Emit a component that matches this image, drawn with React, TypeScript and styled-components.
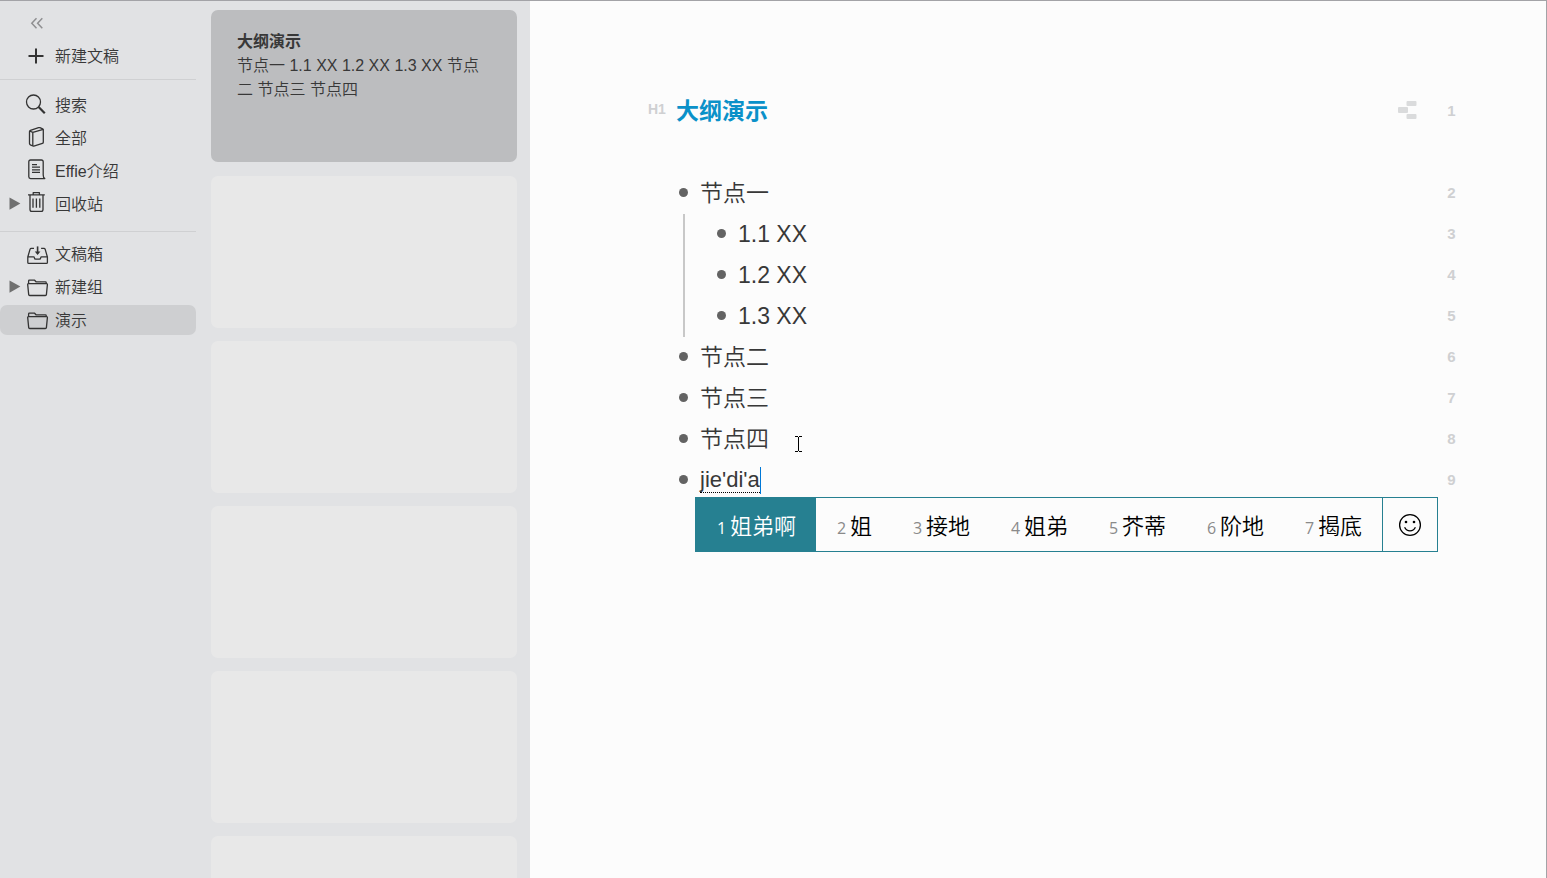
import React from "react";
import styled, { createGlobalStyle } from "styled-components";

const GlobalStyle = createGlobalStyle`
  * { box-sizing: border-box; }
  body { margin: 0; overflow: hidden; }
  body, button {
    font-family: "Liberation Sans", "Noto Sans CJK SC", sans-serif;
    font-weight: 350;
    color: #383838;
  }
  button {
    border: 0;
    padding: 0;
    background: none;
    text-align: left;
    cursor: pointer;
  }
  h1, h2, p, ul, ol { margin: 0; padding: 0; }
  ul, ol { list-style: none; }
  svg { display: block; }
`;

const Shell = styled.div`
  display: flex;
  height: 100vh;
  overflow: hidden;
  background: #e1e2e4;
  border-top: 1px solid #a3a3a7;
  border-right: 1px solid #a3a3a7;
`;

const Nav = styled.nav`
  flex: 0 0 196px;
  padding-top: 11px;
`;

const CollapseButton = styled.button`
  display: block;
  margin: 0 0 7px 30px;
  height: 22px;
`;

const NavList = styled.ul`
  display: flex;
  flex-direction: column;
  gap: 3px;
`;

const NavItem = styled.button<{ $selected?: boolean }>`
  display: grid;
  grid-template-columns: 12px 24px 1fr;
  column-gap: 4px;
  align-items: center;
  width: 100%;
  height: 30px;
  padding-left: 9px;
  border-radius: 7px;
  font-size: 16px;
  line-height: 28px;
  background: ${(p) => (p.$selected ? "#cecfd1" : "transparent")};
`;

const NavLabel = styled.span`
  padding: 2px 0 0 2px;
`;

const Divider = styled.hr<{ $above: number; $below: number }>`
  height: 1px;
  border: 0;
  margin: ${(p) => p.$above}px 0 ${(p) => p.$below}px;
  background: #cfd0d2;
`;

const Sheets = styled.section`
  flex: 0 0 334px;
  padding: 9px 13px 0 15px;
`;

const SheetCard = styled.article`
  height: 152px;
  padding: 20px 26px;
  border-radius: 7px;
  background: #bcbdbf;
  font-size: 16px;
  line-height: 24px;
`;

const SheetTitle = styled.h2`
  font-size: 16px;
  line-height: 24px;
  font-weight: 700;
`;

const EmptySheets = styled.ul`
  display: flex;
  flex-direction: column;
  gap: 13px;
  margin-top: 14px;
`;

const EmptySheet = styled.li`
  height: 152px;
  border-radius: 7px;
  background: #e8e8e8;
`;

const Editor = styled.main`
  position: relative;
  flex: 1;
  min-width: 0;
  padding: 90px 90px 0 118px;
  background: #fcfcfc;
`;

const HeadingRow = styled.header`
  display: flex;
  align-items: center;
  height: 41px;
  margin-bottom: 41px;
  padding-bottom: 2px;
`;

const HeadingMark = styled.span`
  flex: 0 0 28px;
  padding-bottom: 4px;
  font-size: 14px;
  line-height: 20px;
  font-weight: 700;
  color: #cfd0d2;
`;

const Title = styled.h1`
  flex: 1;
  padding-top: 2px;
  font-size: 23px;
  line-height: 41px;
  font-weight: 700;
  color: #0a91c9;
`;

const MapButton = styled.button`
  margin-right: 30px;
  padding-bottom: 2px;
`;

const LineNumber = styled.span`
  flex: 0 0 9px;
  font-size: 15px;
  line-height: 20px;
  font-weight: 700;
  text-align: center;
  color: #cfd0d2;
`;

const Outline = styled.ol`
  margin-left: 28px;
  font-size: 23px;
`;

const Branch = styled.ol`
  margin-left: 7px;
  padding-left: 29px;
  border-left: 2px solid #c8c8c8;
`;

const OutlineRow = styled.div`
  position: relative;
  display: flex;
  align-items: center;
  height: 41px;
  padding-bottom: 2px;
  line-height: 41px;
`;

const Bullet = styled.span`
  flex: 0 0 9px;
  height: 9px;
  margin: 0 12px 0 3px;
  border-radius: 50%;
  background: #636363;
`;

const RowText = styled.div`
  flex: 1;
  padding-top: 2px;
`;

const ComposingText = styled.div`
  flex: 1;
  display: flex;
  align-items: center;
  padding-top: 2px;
`;

const Composing = styled.span`
  font-size: 22px;
  line-height: 24px;
  border-bottom: 1px dotted #000;
`;

const Caret = styled.span`
  width: 1px;
  height: 27px;
  background: #0078d7;
`;

const Candidates = styled.div`
  position: absolute;
  top: 37px;
  left: 19px;
  display: flex;
  height: 55px;
  border: 1px solid #268091;
  background: #fcfcfc;
`;

const Candidate = styled.button<{ $active?: boolean }>`
  display: flex;
  align-items: baseline;
  gap: 4px;
  padding: 2px 20px 0 21px;
  font-size: 22px;
  line-height: 54px;
  white-space: nowrap;
  color: ${(p) => (p.$active ? "#fff" : "#000")};
  background: ${(p) => (p.$active ? "#268091" : "transparent")};
`;

const CandidateKey = styled.span<{ $active?: boolean }>`
  width: 9px;
  font-family: "Open Sans", sans-serif;
  font-size: 16px;
  font-weight: 400;
  color: ${(p) => (p.$active ? "#fff" : "#8a8a8a")};
`;

const EmojiButton = styled.button`
  display: grid;
  place-items: center;
  width: 55px;
  border-left: 1px solid #268091;
`;

const Pointer = styled.svg`
  position: absolute;
  top: 435px;
  left: 265px;
  pointer-events: none;
`;

const Icon = ({ children }: { children: React.ReactNode }) => (
  <svg width="24" height="24" viewBox="0 0 24 24" fill="none" stroke="#333" strokeWidth="1.3" strokeLinejoin="round" aria-hidden="true">
    {children}
  </svg>
);

const icons = {
  plus: (
    <Icon>
      <path d="M11 4.5v15M3.5 12h15" strokeWidth="2" />
    </Icon>
  ),
  search: (
    <Icon>
      <circle cx="8.5" cy="9" r="7" />
      <path d="M13.6 14l6.2 6.2" strokeWidth="2.2" />
    </Icon>
  ),
  book: (
    <Icon>
      <path d="M7.8 6.4l10.5-3v12.8q0 .9-.9 1.2l-8.6 2.7q-1 .3-1-.7zM7.8 6.4L4.6 5M7.8 20L5.3 18.8q-.8-.4-.8-1.2V5.6q0-1 .9-1.3l8.2-2.6q.7-.2 1.3 0l3.3 1.5" />
    </Icon>
  ),
  page: (
    <Icon>
      <path d="M18.2 16V2.8q0-1.8-1.8-1.8H5.6Q3.8 1 3.8 2.8v15q0 1.8 1.8 1.8h14.2q-1.6-1-1.6-3.6" />
      <path d="M7 5.6h5M7 8.2h8M7 10.8h8M7 13.4h8" />
    </Icon>
  ),
  trash: (
    <Icon>
      <path d="M3 2.9h16.8M8.2 2.9V.7h6.2v2.2M5 2.9v14.6q0 1.9 1.9 1.9h9.2q1.9 0 1.9-1.9V2.9" />
      <path d="M8 6.6v9.2M11.4 6.6v9.2M14.8 6.6v9.2" />
    </Icon>
  ),
  inbox: (
    <Icon>
      <path d="M9 6.4H6.3q-1 0-1.3 1L2.8 15v5.4q0 1 1 1h17.6q1 0 1-1V15l-2.2-7.6q-.3-1-1.3-1h-2.8M2.8 14.8h5.9q.5 0 .6.8.2 1.6 1.5 1.6h3.5q1.3 0 1.5-1.6.1-.8.6-.8h6" />
      <path d="M12.6 4.4v7" strokeWidth="1.6" />
      <path d="M9.8 9.4h5.6l-2.8 3.6z" fill="#333" stroke="none" />
    </Icon>
  ),
  folder: (
    <Icon>
      <path d="M3.6 8.5V6q0-.8.8-.8h5.2l1.4 1.6h9.4q.8 0 .8.8v1.2" />
      <path d="M3.4 8.7h18.2q.9 0 .8.9l-1 10q-.1.9-1 .9H4.7q-.9 0-1-.9l-1-10q-.1-.9.7-.9z" />
    </Icon>
  ),
};

const Disclosure = () => (
  <svg width="12" height="14" viewBox="0 0 12 14" aria-hidden="true">
    <path d="M.5 .4v12.4L11.4 6.6z" fill="#707070" />
  </svg>
);

type Entry = { label: string; icon: keyof typeof icons; expandable?: boolean; selected?: boolean };

const library: Entry[] = [
  { label: "搜索", icon: "search" },
  { label: "全部", icon: "book" },
  { label: "Effie介绍", icon: "page" },
  { label: "回收站", icon: "trash", expandable: true },
];

const groups: Entry[] = [
  { label: "文稿箱", icon: "inbox" },
  { label: "新建组", icon: "folder", expandable: true },
  { label: "演示", icon: "folder", selected: true },
];

const NavEntries = ({ entries }: { entries: Entry[] }) => (
  <NavList>
    {entries.map((e) => (
      <li key={e.label}>
        <NavItem $selected={e.selected}>
          <span>{e.expandable && <Disclosure />}</span>
          {icons[e.icon]}
          <NavLabel>{e.label}</NavLabel>
        </NavItem>
      </li>
    ))}
  </NavList>
);

const Line = ({ text, n }: { text: string; n: number }) => (
  <OutlineRow>
    <Bullet />
    <RowText>{text}</RowText>
    <LineNumber>{n}</LineNumber>
  </OutlineRow>
);

const candidates = ["姐弟啊", "姐", "接地", "姐弟", "芥蒂", "阶地", "揭底"];

export default function App() {
  return (
    <>
      <GlobalStyle />
      <Shell>
        <Nav>
          <CollapseButton aria-label="收起">
            <svg width="14" height="22" viewBox="0 0 14 22" fill="none" stroke="#8f8f91" strokeWidth="1.5">
              <path d="M6.5 6.3L1.8 11.3l4.7 5M12.3 6.3L7.6 11.3l4.7 5" />
            </svg>
          </CollapseButton>
          <NavEntries entries={[{ label: "新建文稿", icon: "plus" }]} />
          <Divider $above={8} $below={10} />
          <NavEntries entries={library} />
          <Divider $above={12} $below={7} />
          <NavEntries entries={groups} />
        </Nav>

        <Sheets>
          <SheetCard>
            <SheetTitle>大纲演示</SheetTitle>
            <p>节点一 1.1 XX 1.2 XX 1.3 XX 节点二 节点三 节点四</p>
          </SheetCard>
          <EmptySheets aria-hidden="true">
            {[0, 1, 2, 3, 4].map((i) => (
              <EmptySheet key={i} />
            ))}
          </EmptySheets>
        </Sheets>

        <Editor>
          <HeadingRow>
            <HeadingMark>H1</HeadingMark>
            <Title>大纲演示</Title>
            <MapButton aria-label="思维导图">
              <svg width="19" height="18" viewBox="0 0 19 18" fill="#dadbdc">
                <rect x="8.5" y="0" width="10" height="5" rx="1" />
                <rect x="0" y="6" width="10" height="6" rx="1" />
                <rect x="8.5" y="13" width="10" height="5" rx="1" />
              </svg>
            </MapButton>
            <LineNumber>1</LineNumber>
          </HeadingRow>
          <Outline>
            <li>
              <Line text="节点一" n={2} />
              <Branch>
                <li><Line text="1.1 XX" n={3} /></li>
                <li><Line text="1.2 XX" n={4} /></li>
                <li><Line text="1.3 XX" n={5} /></li>
              </Branch>
            </li>
            <li><Line text="节点二" n={6} /></li>
            <li><Line text="节点三" n={7} /></li>
            <li><Line text="节点四" n={8} /></li>
            <li>
              <OutlineRow>
                <Bullet />
                <ComposingText>
                  <Composing>jie'di'a</Composing>
                  <Caret />
                </ComposingText>
                <LineNumber>9</LineNumber>
                <Candidates>
                  {candidates.map((word, i) => (
                    <Candidate key={word} $active={i === 0}>
                      <CandidateKey $active={i === 0}>{i + 1}</CandidateKey>
                      {word}
                    </Candidate>
                  ))}
                  <EmojiButton aria-label="表情">
                    <svg width="24" height="24" viewBox="0 0 24 24" fill="none" stroke="#000" strokeWidth="1.3">
                      <circle cx="12" cy="12" r="10.4" />
                      <path d="M6.6 14.2q1.8 3.6 5.4 3.6t5.4-3.6" />
                      <circle cx="8" cy="9" r="1.3" fill="#000" stroke="none" />
                      <circle cx="16" cy="9" r="1.3" fill="#000" stroke="none" />
                    </svg>
                  </EmojiButton>
                </Candidates>
              </OutlineRow>
            </li>
          </Outline>
          <Pointer width="7" height="16" viewBox="0 0 7 16" fill="none" stroke="#000" aria-hidden="true">
            <path d="M0 .5h3M4 .5h3M3.5 1v14M0 15.5h3M4 15.5h3" />
          </Pointer>
        </Editor>
      </Shell>
    </>
  );
}
